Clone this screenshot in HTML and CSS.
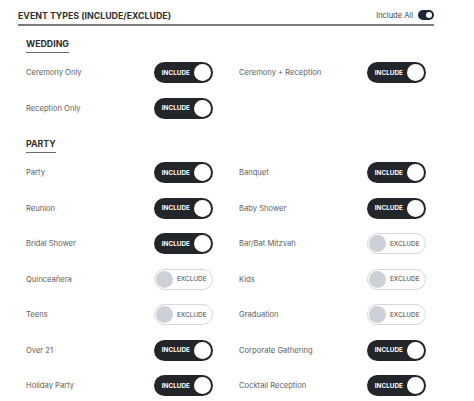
FILE: index.html
```html
<!DOCTYPE html>
<html>
<head>
<meta charset="utf-8">
<link rel="stylesheet" href="styles.css">
</head>
<body>
<div class="panel">
  <div class="header">
    <div class="title">EVENT TYPES (INCLUDE/EXCLUDE)</div>
    <div class="all">Include All <span class="mini"><span class="mini-knob"></span></span></div>
  </div>

  <div class="section">
    <div class="heading">WEDDING</div>
    <div class="grid">
      <div class="row"><span class="label">Ceremony Only</span><span class="tog on"><span class="txt">INCLUDE</span><span class="knob"></span></span></div>
      <div class="row"><span class="label">Ceremony + Reception</span><span class="tog on"><span class="txt">INCLUDE</span><span class="knob"></span></span></div>
      <div class="row"><span class="label">Reception Only</span><span class="tog on"><span class="txt">INCLUDE</span><span class="knob"></span></span></div>
    </div>
  </div>

  <div class="section">
    <div class="heading">PARTY</div>
    <div class="grid">
      <div class="row"><span class="label">Party</span><span class="tog on"><span class="txt">INCLUDE</span><span class="knob"></span></span></div>
      <div class="row"><span class="label">Banquet</span><span class="tog on"><span class="txt">INCLUDE</span><span class="knob"></span></span></div>
      <div class="row"><span class="label">Reunion</span><span class="tog on"><span class="txt">INCLUDE</span><span class="knob"></span></span></div>
      <div class="row"><span class="label">Baby Shower</span><span class="tog on"><span class="txt">INCLUDE</span><span class="knob"></span></span></div>
      <div class="row"><span class="label">Bridal Shower</span><span class="tog on"><span class="txt">INCLUDE</span><span class="knob"></span></span></div>
      <div class="row"><span class="label">Bar/Bat Mitzvah</span><span class="tog off"><span class="knob"></span><span class="txt">EXCLUDE</span></span></div>
      <div class="row"><span class="label">Quinceañera</span><span class="tog off"><span class="knob"></span><span class="txt">EXCLUDE</span></span></div>
      <div class="row"><span class="label">Kids</span><span class="tog off"><span class="knob"></span><span class="txt">EXCLUDE</span></span></div>
      <div class="row"><span class="label">Teens</span><span class="tog off"><span class="knob"></span><span class="txt">EXCLUDE</span></span></div>
      <div class="row"><span class="label">Graduation</span><span class="tog off"><span class="knob"></span><span class="txt">EXCLUDE</span></span></div>
      <div class="row"><span class="label">Over 21</span><span class="tog on"><span class="txt">INCLUDE</span><span class="knob"></span></span></div>
      <div class="row"><span class="label">Corporate Gathering</span><span class="tog on"><span class="txt">INCLUDE</span><span class="knob"></span></span></div>
      <div class="row"><span class="label">Holiday Party</span><span class="tog on"><span class="txt">INCLUDE</span><span class="knob"></span></span></div>
      <div class="row"><span class="label">Cocktail Reception</span><span class="tog on"><span class="txt">INCLUDE</span><span class="knob"></span></span></div>
    </div>
  </div>
</div>
</body>
</html>
```

FILE: styles.css
```css
html, body {
  margin: 0;
  padding: 0;
  background: #ffffff;
}
body {
  font-family: Inter, "Noto Sans", "Liberation Sans", sans-serif;
  color: #333;
}
.panel {
  width: 416px;
  padding: 7px 0 0 18px;
}
.header {
  display: flex;
  justify-content: space-between;
  align-items: center;
  height: 17px;
  border-bottom: 2px solid #7a7a7a;
}
.title {
  font-size: 8.8px;
  font-weight: 700;
  color: #2f2f2f;
}
.all {
  display: flex;
  align-items: center;
  gap: 5px;
  font-size: 7.5px;
  color: #444;
  margin-top: -1px;
}
.mini {
  width: 16px;
  height: 10px;
  border-radius: 5px;
  background: #1b2636;
  display: flex;
  align-items: center;
  justify-content: flex-end;
  padding: 0 2px;
  box-sizing: border-box;
}
.mini-knob {
  width: 6px;
  height: 6px;
  border-radius: 50%;
  background: #fff;
}
.section {
  padding-left: 8px;
}
.heading {
  display: inline-block;
  margin-top: 12px;
  font-size: 8.8px;
  font-weight: 700;
  color: #2f2f2f;
  padding-bottom: 3px;
  border-bottom: 1.5px solid #6a6a6a;
}
.grid {
  display: grid;
  grid-template-columns: 187px 187px;
  column-gap: 26px;
  margin-top: 2px;
}
.row {
  display: flex;
  justify-content: space-between;
  align-items: center;
  height: 35.5px;
}
.label {
  font-size: 7.6px;
  color: #606060;
}
.tog {
  width: 59px;
  height: 21px;
  border-radius: 11px;
  box-sizing: border-box;
  display: flex;
  align-items: center;
}
.tog.on {
  background: #222529;
  justify-content: flex-end;
  padding-right: 2px;
}
.tog.on .txt {
  color: #fff;
  font-weight: 700;
  font-size: 6.4px;
  margin-right: 4px;
}
.tog.on .knob {
  width: 17px;
  height: 17px;
  border-radius: 50%;
  background: #fff;
}
.tog.off {
  background: #fff;
  border: 1px solid #d3d6da;
  padding-left: 1px;
}
.tog.off .knob {
  width: 17px;
  height: 17px;
  border-radius: 50%;
  background: #cdd1d7;
}
.tog.off .txt {
  color: #444;
  font-size: 6.4px;
  margin-left: 4px;
}
```
